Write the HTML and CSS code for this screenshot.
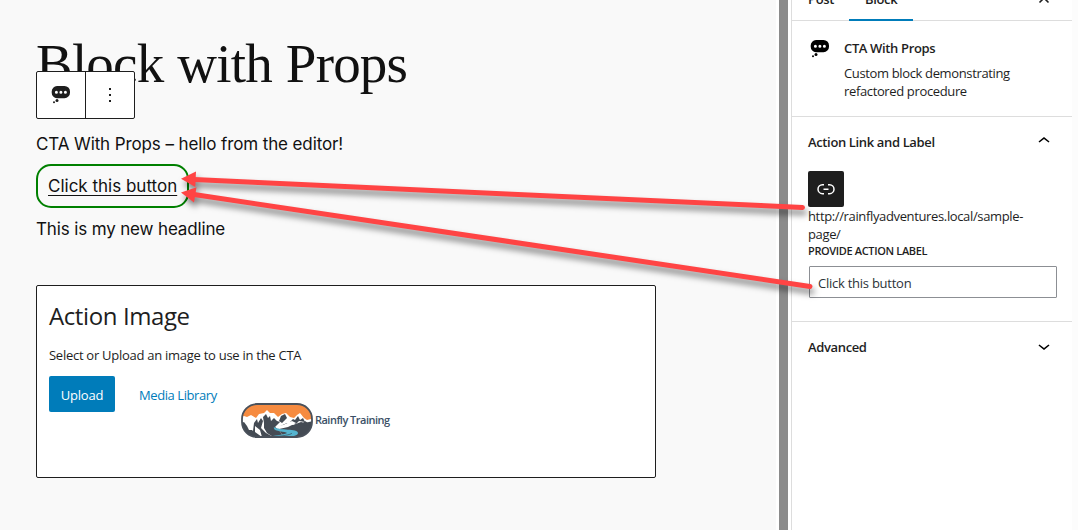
FILE: index.html
```html
<!DOCTYPE html>
<html lang="en">
<head>
<meta charset="utf-8">
<title>Block with Props</title>
<link rel="stylesheet" href="styles.css">
</head>
<body>
<svg class="defs" width="0" height="0" aria-hidden="true">
  <symbol id="bubble" viewBox="0 0 20 20">
    <path fill-rule="evenodd" d="M6 1h7.500a5.500 5.500 0 0 1 5.500 5.500v1.200a5.500 5.500 0 0 1-5.500 5.500H6A5.500 5.500 0 0 1 .7 7.700V6.500A5.500 5.500 0 0 1 6 1zM5.400 5.700a1.500 1.500 0 1 0 0 3 1.500 1.500 0 0 0 0-3zm4.500 0a1.500 1.500 0 1 0 0 3 1.500 1.500 0 0 0 0-3zm4.500 0a1.500 1.500 0 1 0 0 3 1.500 1.500 0 0 0 0-3z"/>
    <circle cx="6" cy="15.500" r="1.500"/><circle cx="3" cy="17.200" r="1"/>
  </symbol>
</svg>
<div class="editor">
  <main class="canvas">
    <h1 class="post-title">Block with Props</h1>
    <div class="toolbar">
      <div class="tool"><svg width="20" height="20"><use href="#bubble"/></svg></div>
      <div class="tool more"><svg width="24" height="24" viewBox="0 0 24 24"><path d="M11 5h2v2h-2zm0 6h2v2h-2zm0 6h2v2h-2z"/></svg></div>
    </div>
    <p class="copy greeting">CTA With Props – hello from the editor!</p>
    <div class="cta"><a class="cta-link">Click this button</a></div>
    <p class="copy headline">This is my new headline</p>
    <section class="media">
      <h2 class="media-title">Action Image</h2>
      <p class="media-help">Select or Upload an image to use in the CTA</p>
      <div class="media-actions">
        <button class="upload">Upload</button>
        <span class="library">Media Library</span>
        <div class="brand">
          <svg width="72" height="35" viewBox="0 0 72 35">
            <defs><clipPath id="badge"><rect x="1" y="1" width="70" height="33" rx="15"/></clipPath></defs>
            <g clip-path="url(#badge)">
              <rect width="72" height="35" fill="#f68b40"/>
              <path fill="#fff" d="M0 14l3-1 3 1 4-2 5 3 3-4 5-1 3-3 3 3 4 0 4 4 4-3 4-1 4 4 4 1 3-3 3-2 4 5 3 2 4-1 2 2v17H0z"/>
              <path fill="#444b54" d="M0 35V20l3-1 3 4 2 4 3 0 3 3 3 5zM13 20l3-4 1 4 3-5 2 3-2 7 5 5 9 5H16l-4-7zM22 14l3-3 2 4 2-2 1 5 3-3 3 3 3 1-5 5 4 3 5 8h-9l-8-5-3-5 0-5zM40 13l4-2 2 4-5 5-3-2zM37 24l9-4 6 2 8-3 4 1 8-2v17H44l-4-5z"/>
              <path fill="#444b54" d="M49 19l3-3 2 1 3-4 2 4 3-2 2 4-6-1-3 3zM62 20l2-2 3 2 4-1v4l-9-1z"/>
              <path fill="#fff" d="M35 23l7-1 9-4 4 2-8 4-9 2zM14 23l5 4 2 7-7-5z"/>
              <path fill="#55b4cf" d="M33 24c5 4 24 1 24 6 0 3-8 4-18 5H19c13-2 27-4 27-5-1-2-15-1-13-6z"/>
              <path fill="none" stroke="#39505d" stroke-width=".7" d="M29 34c12-1 21-2 22-4"/>
            </g>
            <rect x="1" y="1" width="70" height="33" rx="15" fill="none" stroke="#4a515b" stroke-width="1.800"/>
          </svg>
          <span class="brand-name">Rainfly Training</span>
        </div>
      </div>
    </section>
  </main>
  <div class="gutter"></div>
  <aside class="sidebar">
    <div class="tabs">
      <span class="tab">Post</span><span class="tab active">Block</span>
      <svg class="close" width="24" height="24" viewBox="0 0 24 24"><path d="M7.500 7.500l9 9M16.500 7.500l-9 9" stroke="#1e1e1e" stroke-width="1.600"/></svg>
    </div>
    <div class="card">
      <svg class="card-icon" width="20" height="20"><use href="#bubble"/></svg>
      <div class="card-body">
        <h3 class="label">CTA With Props</h3>
        <p class="text card-desc">Custom block demonstrating<br>refactored procedure</p>
      </div>
    </div>
    <section class="panel">
      <div class="panel-head"><h3 class="label">Action Link and Label</h3>
        <svg width="24" height="24" viewBox="0 0 24 24"><path d="M6.500 12.400L12 8l5.500 4.400-.9 1.200L12 10l-4.500 3.600z"/></svg></div>
      <button class="link-button"><svg width="24" height="24" viewBox="0 0 24 24" fill="#fff"><path d="M10 17.389H8.444A5.194 5.194 0 1 1 8.444 7H10v1.500H8.444a3.694 3.694 0 0 0 0 7.389H10v1.500zM14 7h1.556a5.194 5.194 0 0 1 0 10.390H14v-1.500h1.556a3.694 3.694 0 0 0 0-7.390H14V7zm-4.500 6h5v-1.500h-5V13z"/></svg></button>
      <p class="text url">http://rainflyadventures.local/sample-<br>page/</p>
      <label class="field-label" for="action">PROVIDE ACTION LABEL</label>
      <input class="field" id="action" value="Click this button">
    </section>
    <section class="panel advanced">
      <div class="panel-head"><h3 class="label">Advanced</h3>
        <svg width="24" height="24" viewBox="0 0 24 24"><path d="M17.500 11.600L12 16l-5.500-4.400.9-1.200L12 14l4.500-3.600z"/></svg></div>
    </section>
  </aside>
  <svg class="arrows" width="1078" height="530" viewBox="0 0 1078 530">
    <g fill="#ff4444" stroke="#ff4444">
      <path d="M802.500 207.500L194 179.500" stroke-width="5" stroke-linecap="round"/><path d="M181 178.800L196 171.500L195.300 187z" stroke="none"/>
      <path d="M810 286.500L194 194.500" stroke-width="5" stroke-linecap="round"/><path d="M181 192.500L196.500 187.300L194 202.500z" stroke="none"/>
    </g>
  </svg>
</div>
</body>
</html>
```
FILE: styles.css
```css
* { box-sizing: border-box; }
body { margin: 0; width: 1078px; height: 530px; overflow: hidden; background: #fff; color: #1e1e1e; font: 13px/18px "Open Sans", "Noto Sans", sans-serif; }
h1, h2, h3, p { margin: 0; font-weight: 400; }
svg { display: block; flex: none; }
button { border: 0; font: inherit; padding: 0; }
.defs { position: absolute; }
.editor { position: relative; display: flex; width: 1078px; height: 530px; }
.editor::after { content: ""; width: 6px; background: #fcfcfc; }

/* Post canvas */
.canvas { position: relative; width: 776px; padding: 30px 0 0 36px; background: #f9f9f9; }
.post-title { height: 70px; font: 400 55px/68px "Liberation Serif", serif; letter-spacing: -.8px; word-spacing: 1px; color: #111; white-space: nowrap; }
.toolbar { position: absolute; left: 36px; top: 71px; display: flex; width: 99px; height: 48px; border: 1px solid #1e1e1e; border-radius: 2px; background: #fff; }
.tool { display: flex; align-items: center; justify-content: center; width: 48px; fill: #1e1e1e; }
.more { width: 49px; border-left: 1px solid #1e1e1e; }
.copy { font: 400 17px/26px Inter, sans-serif; letter-spacing: -.11px; color: #111; white-space: nowrap; }
.greeting { margin-top: 31px; }
.cta { width: 153px; height: 44px; margin-top: 7px; padding: 8px 10px; border: 2px solid #008000; border-radius: 15px; }
.cta-link { display: block; font: 400 17px/24px Inter, sans-serif; color: #111; text-decoration: underline; text-decoration-thickness: 1px; text-underline-offset: 3px; white-space: nowrap; }
.headline { margin-top: 8px; letter-spacing: -.14px; }

/* Media placeholder */
.media { width: 620px; height: 193px; margin-top: 43px; padding: 11px 12px; border: 1px solid #1e1e1e; border-radius: 2px; background: #fff; }
.media-title { font-size: 24px; line-height: 38px; letter-spacing: -.4px; }
.media-help { margin-top: 11px; letter-spacing: -.27px; white-space: nowrap; }
.media-actions { display: flex; align-items: flex-start; margin-top: 12px; }
.upload { width: 66px; height: 36px; padding-top: 2px; border-radius: 2px; background: #007cba; color: #fff; letter-spacing: -.2px; }
.library { width: 102px; margin-left: 24px; line-height: 38px; letter-spacing: -.42px; color: #007cba; white-space: nowrap; }
.brand { display: flex; align-items: center; gap: 2px; margin-top: 27px; }
.brand-name { margin-top: -2px; font-size: 11px; font-weight: 600; line-height: 14px; letter-spacing: -.52px; color: #3b5066; white-space: nowrap; }

/* Settings sidebar */
.gutter { width: 15px; border: solid #fff; border-width: 0 3px; background: #8b8b8b; }
.sidebar { width: 281px; border-left: 1px solid #ddd; background: #fff; }
.label, .tab { font-size: 13px; font-weight: 600; line-height: 18px; letter-spacing: -.36px; white-space: nowrap; }
.text { letter-spacing: -.36px; white-space: nowrap; }
.tabs { display: flex; height: 21px; border-bottom: 1px solid #ddd; }
.tab { width: 57px; height: 21px; margin-top: -1px; padding: 0 16px; line-height: 0; }
.tab.active { width: 64px; height: 22px; border-bottom: 2px solid #007cba; }
.close { margin: -14px 0 0 119px; }
.card { display: flex; height: 96px; padding: 18px 16px 0; border-bottom: 1px solid #ddd; }
.card-icon { margin-left: 2px; }
.card-body { margin-left: 14px; }
.card-desc { margin-top: 7px; }
.panel { height: 205px; padding: 16px 15px 0 16px; border-bottom: 1px solid #ddd; }
.panel-head { display: flex; justify-content: space-between; height: 38px; }
.panel-head svg { margin: -4px 1px 0 0; }
.link-button { display: flex; align-items: center; justify-content: center; width: 36px; height: 36px; border-radius: 2px; background: #1e1e1e; }
.url { height: 36px; }
.field-label { display: block; font-size: 11px; font-weight: 600; line-height: 16px; letter-spacing: -.36px; white-space: nowrap; }
.field { display: block; width: 248px; height: 32px; margin: 7px 0 0 1px; padding: 2px 8px 0; border: 1px solid #8c8f94; border-radius: 1px; background: #fff; color: #2c3338; font: inherit; letter-spacing: -.25px; }
.advanced { height: 208px; border: 0; }

/* Annotation arrows */
.arrows { position: absolute; left: 0; top: 0; filter: drop-shadow(2px 5px 3px rgba(0,0,0,.5)); pointer-events: none; }
```
